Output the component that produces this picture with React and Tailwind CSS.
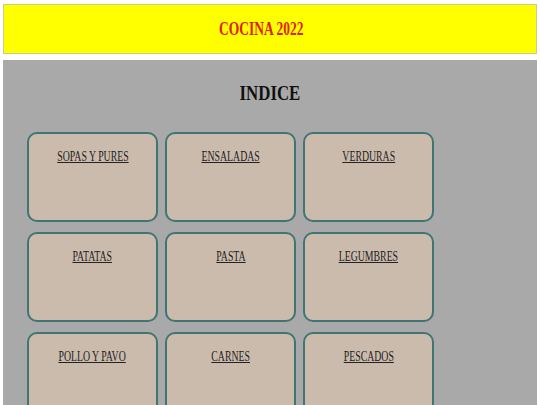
import React from 'react';

const secciones = [
    'SOPAS Y PURES', 'ENSALADAS', 'VERDURAS',
    'PATATAS', 'PASTA', 'LEGUMBRES',
    'POLLO Y PAVO', 'CARNES', 'PESCADOS',
];

const App = () => {
    return (
        <div className="h-screen overflow-hidden bg-white pt-1 px-[3px] font-['Liberation_Serif',serif]">
            <header className="h-[50px] flex items-center justify-center bg-[#ffff00] border border-[#cdc98f] pr-[18px]">
                <h1 className="inline-block scale-x-75 text-[18px] font-bold text-[#e0200b]">COCINA 2022</h1>
            </header>

            <section className="mt-[6px] bg-[#a9a9a9] px-6 pt-5 pb-10 min-h-[345px]">
                <h2 className="text-center text-[21px] leading-[26px] font-bold text-[#111]">
                    <span className="inline-block scale-x-80">INDICE</span>
                </h2>

                <div className="mt-[26px] grid grid-cols-[131px_131px_131px] gap-x-[7px] gap-y-[10px]">
                    {secciones.map(nombre => (
                        <div key={nombre} className="h-[90px] border-2 border-[#3f7674] rounded-[10px] bg-[#cbbbad] pt-[10px] text-center">
                            <a href="#" className="inline-block scale-x-[0.7] text-[14px] leading-5 text-[#222] underline">{nombre}</a>
                        </div>
                    ))}
                </div>
            </section>
        </div>
    );
};

export default App;
